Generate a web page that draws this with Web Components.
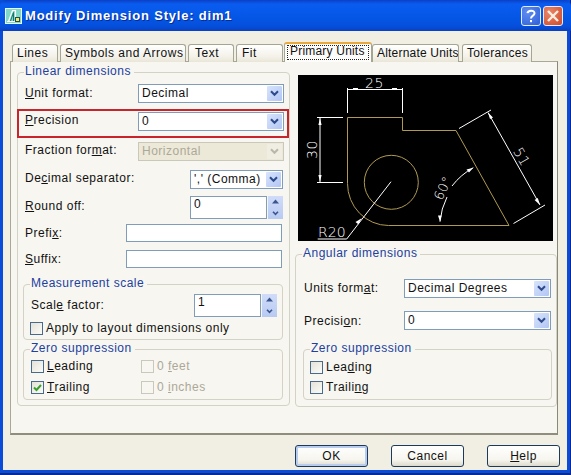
<!DOCTYPE html>
<html>
<head>
<meta charset="utf-8">
<title>Modify Dimension Style</title>
<style>
    html, body { margin: 0; padding: 0; background: #fff; }
    body { font: 12px "Liberation Sans", Arial, sans-serif; letter-spacing: .5px; color: #111; }
    .up1 { display: inline-block; padding-bottom: 2px; }
    .up2 { display: inline-block; padding-bottom: 3px; }
    .up3 { display: inline-block; padding-bottom: 4px; }
</style>
</head>
<body>
<xp-window caption="Modify Dimension Style: dim1">
    <xp-tabs>
        <xp-tab style="width:46px;padding-left:4px">Lines</xp-tab>
        <xp-tab style="width:126px;padding-left:4px;margin-left:2px">Symbols and Arrows</xp-tab>
        <xp-tab style="width:46px;padding-left:6px;margin-left:2px">Text</xp-tab>
        <xp-tab style="width:47px;padding-left:5px;margin-left:2px">Fit</xp-tab>
        <xp-tab selected style="width:88px;margin-left:1px;letter-spacing:.2px">Primary Units</xp-tab>
        <xp-tab style="width:87px;padding-left:4px;letter-spacing:.2px">Alternate Units</xp-tab>
        <xp-tab style="width:70px;padding-left:4px;margin-left:3px;letter-spacing:.3px">Tolerances</xp-tab>
    </xp-tabs>
    <xp-panel>
        <div slot="left">
            <xp-group caption="Linear dimensions" style="margin-top:1px;padding-bottom:5px">
                <xp-row style="margin-top:4px;height:20px">
                    <span><u>U</u>nit format:</span>
                    <xp-combo slot="control" value="Decimal" style="width:146px"></xp-combo>
                </xp-row>
                <xp-row marked style="margin-top:6px;height:29px">
                    <span><u>P</u>recision</span>
                    <xp-combo slot="control" value="0" style="width:146px"></xp-combo>
                </xp-row>
                <xp-row style="margin-top:4px;height:19px">
                    <span class="up2">Fraction for<u>m</u>at:</span>
                    <xp-combo slot="control" value="Horizontal" disabled style="width:146px"></xp-combo>
                </xp-row>
                <xp-row style="margin-top:9px;height:19px">
                    <span class="up2">De<u>c</u>imal separator:</span>
                    <xp-combo slot="control" value="',' (Comma)" style="width:93px;margin-right:1px"></xp-combo>
                </xp-row>
                <xp-row style="margin-top:7px;height:23px">
                    <span class="up3"><u>R</u>ound off:</span>
                    <xp-spin slot="control" value="0" style="width:93px;margin-right:1px"></xp-spin>
                </xp-row>
                <xp-row style="margin-top:5px;height:18px">
                    <span>Prefi<u>x</u>:</span>
                    <xp-input slot="control" style="width:156px;margin-right:2px"></xp-input>
                </xp-row>
                <xp-row style="margin-top:8px;height:18px">
                    <span><u>S</u>uffix:</span>
                    <xp-input slot="control" style="width:156px;margin-right:2px"></xp-input>
                </xp-row>
                <xp-group caption="Measurement scale" style="margin:9px 6px 0 5px;padding-bottom:4px">
                    <xp-row style="margin-top:3px;height:23px;--row-left:7px">
                        <span class="up1">Scal<u>e</u> factor:</span>
                        <xp-spin slot="control" value="1" style="width:83px"></xp-spin>
                    </xp-row>
                    <xp-check style="margin:5px 0 0 6px">Apply to layout dimensions only</xp-check>
                </xp-group>
                <xp-group caption="Zero suppression" style="margin:2px 6px 0 5px;padding-bottom:5px">
                    <xp-checkgrid style="margin:4px 0 0 7px">
                        <xp-check><u>L</u>eading</xp-check>
                        <xp-check disabled>0 <u>f</u>eet</xp-check>
                        <xp-check checked><u>T</u>railing</xp-check>
                        <xp-check disabled>0 <u>i</u>nches</xp-check>
                    </xp-checkgrid>
                </xp-group>
            </xp-group>
        </div>
        <div slot="right">
            <dim-preview></dim-preview>
            <xp-group caption="Angular dimensions" style="margin-top:6px;padding-bottom:6px">
                <xp-row style="margin-top:17px;height:20px;--row-left:8px">
                    <span>Units form<u>a</u>t:</span>
                    <xp-combo slot="control" value="Decimal Degrees" style="width:147px"></xp-combo>
                </xp-row>
                <xp-row style="margin-top:13px;height:19px;--row-left:8px">
                    <span>Precisi<u>o</u>n:</span>
                    <xp-combo slot="control" value="0" style="width:147px"></xp-combo>
                </xp-row>
                <xp-group caption="Zero suppression" style="margin:12px 4px 0 7px;padding-bottom:5px">
                    <xp-check style="margin:5px 0 0 6px">Lea<u>d</u>ing</xp-check>
                    <xp-check style="margin:7px 0 0 6px">Traili<u>n</u>g</xp-check>
                </xp-group>
            </xp-group>
        </div>
    </xp-panel>
    <xp-buttons slot="footer">
        <xp-button default>OK</xp-button>
        <xp-button>Cancel</xp-button>
        <xp-button><u>H</u>elp</xp-button>
    </xp-buttons>
</xp-window>

<script>
class XpElement extends HTMLElement {
    constructor(html) {
        super();
        this.attachShadow({ mode: 'open' });
        this.shadowRoot.innerHTML = html;
    }
}

class XpWindow extends XpElement {
    constructor() {
        super(`
            <style>
                :host {
                    display: flex; flex-direction: column; width: 571px; height: 475px; overflow: hidden;
                    background: #0a4cd8; box-shadow: inset -1px -2px 0 #0a2a8c;
                }
                .title {
                    display: flex; align-items: center; flex: none; height: 31px; padding: 0 8px 0 5px;
                    border-radius: 6px 6px 0 0;
                    background: linear-gradient(#0b3fc4 0, #0a5cf0 4px, #0558e8 14px, #0450dc 26px, #0a3fbe 31px);
                }
                .title svg { flex: none; }
                .caption {
                    flex: 1; margin-left: 3px; color: #fff; font: bold 13px "Liberation Sans", sans-serif;
                    letter-spacing: .8px; text-shadow: 1px 1px 0 #0a2a90; white-space: nowrap;
                }
                .ctl { flex: none; width: 20px; height: 20px; margin-left: 2px; box-sizing: border-box; border: 1px solid #e6ecfa; border-radius: 3px; }
                .help { background: radial-gradient(circle at 30% 30%, #5f8cf0, #2f5fd8); }
                .close { background: radial-gradient(circle at 30% 30%, #e8866a, #cf4a28); }
                .ctl svg { display: block; }
                .client {
                    flex: 1; display: flex; flex-direction: column; margin: 0 4px 5px 3px; padding: 11px 9px 0 7px;
                    background: #f1eee3;
                }
                .footer { display: block; }
            </style>
            <div class="title">
                <svg width="17" height="16" viewBox="0 0 17 16">
                    <rect x=".5" y=".5" width="16" height="15" fill="#7fd8c8" stroke="#e8fbf6"/>
                    <path d="M2 13.5H15M3.5 13.5L7.5 2.5H10.5V10" fill="none" stroke="#fff" stroke-width="1.2"/>
                    <path d="M5.5 13L8.5 4.5V13" fill="none" stroke="#14786c" stroke-width="1"/>
                    <rect x="10.5" y="9.5" width="4" height="4" fill="#f4e874" stroke="#24504a" stroke-width="1"/>
                </svg>
                <div class="caption" id="cap"></div>
                <div class="ctl help"><svg width="18" height="18" viewBox="0 0 18 18"><path d="M5.5 6.2C5.8 3 12.5 2.6 12.5 6.2C12.5 8.8 9 8.4 9 11.5" fill="none" stroke="#fff" stroke-width="2"/><rect x="8" y="13" width="2" height="2.2" fill="#fff"/></svg></div>
                <div class="ctl close"><svg width="18" height="18" viewBox="0 0 18 18"><path d="M4 4L14 14M14 4L4 14" stroke="#fbeee0" stroke-width="2.4"/></svg></div>
            </div>
            <div class="client">
                <slot></slot>
                <slot name="footer" class="footer"></slot>
            </div>
        `);
    }

    connectedCallback() {
        this.shadowRoot.querySelector('#cap').textContent = this.getAttribute('caption');
    }
}

class XpTabs extends XpElement {
    constructor() {
        super(`
            <style>
                :host { display: flex; align-items: flex-end; height: 20px; margin: 0 0 -1px 2px; position: relative; z-index: 1; }
            </style>
            <slot></slot>
        `);
    }
}

class XpTab extends XpElement {
    constructor() {
        super(`
            <style>
                :host {
                    display: block; flex: none; box-sizing: border-box; height: 18px; line-height: 16px; white-space: nowrap; overflow: hidden;
                    border: 1px solid #a5a593; border-bottom: 0; border-radius: 3px 3px 0 0;
                    background: linear-gradient(#fff, #f3f1e8 70%, #e9e6d8);
                }
                :host([selected]) {
                    height: 20px; padding: 1px 2px; background: #fcfcfa;
                    border-top: 2px solid #eaa83a; border-color: #eaa83a #a5a593 #fcfcfa #a5a593;
                }
                .focus { display: block; }
                :host([selected]) .focus { line-height: 12px; outline: 1px dotted #222; outline-offset: -1px; padding: 0 0 3px 3px; }
            </style>
            <span class="focus"><slot></slot></span>
        `);
    }
}

class XpPanel extends XpElement {
    constructor() {
        super(`
            <style>
                :host {
                    display: grid; grid-template-columns: 273px 262px; column-gap: 5px; align-content: start; flex: none; box-sizing: border-box;
                    height: 374px; padding: 2px 0 0 6px;
                    border: 1px solid #a9a798; border-right-color: #8a8878; border-bottom: 2px solid #8f8d7e; background: #f7f6f0;
                }
            </style>
            <slot name="left"></slot>
            <slot name="right"></slot>
        `);
    }
}

class XpGroup extends XpElement {
    constructor() {
        super(`
            <style>
                :host { display: block; }
                fieldset { margin: 0; padding: 0; border: 1px solid #d4d2c4; border-radius: 4px; }
                legend { height: 14px; margin-left: 6px; padding: 0 3px 0 1px; line-height: 13px; color: #2140a0; white-space: nowrap; }
            </style>
            <fieldset>
                <legend id="cap"></legend>
                <slot></slot>
            </fieldset>
        `);
    }

    connectedCallback() {
        this.shadowRoot.querySelector('#cap').textContent = this.getAttribute('caption');
        // padding belongs inside the border, so pass it on to the fieldset
        const pb = this.style.paddingBottom;
        if (pb) {
            this.shadowRoot.querySelector('fieldset').style.paddingBottom = pb;
            this.style.paddingBottom = '0';
        }
    }
}

class XpRow extends XpElement {
    constructor() {
        super(`
            <style>
                :host { display: flex; align-items: center; justify-content: space-between; box-sizing: border-box; padding: 0 5px 0 var(--row-left, 7px); white-space: nowrap; }
                :host([marked]) { margin-left: -1px; padding: 0 3px 0 6px; border: 2px solid #c8242c; align-items: flex-start; }
                :host([marked]) .lbl { margin-top: 2px; }
                :host([marked]) .ctl { margin-top: 1px; }
                .ctl { display: block; }
            </style>
            <span class="lbl"><slot></slot></span>
            <span class="ctl"><slot name="control"></slot></span>
        `);
    }
}

class XpCombo extends XpElement {
    constructor() {
        super(`
            <style>
                :host { display: flex; box-sizing: border-box; height: 19px; padding: 1px; border: 1px solid #7f9db9; background: #fff; }
                .val { flex: 1; padding-left: 2px; line-height: 15px; overflow: hidden; white-space: nowrap; }
                .btn { flex: none; display: flex; align-items: center; justify-content: center; width: 15px; background: linear-gradient(135deg, #d8e4fb, #b2c6f4); border-radius: 1px; }
                :host([disabled]) { border-color: #cac8bb; background: #ece9d8; }
                :host([disabled]) .val { color: #aca899; }
                :host([disabled]) .btn { background: #f0eee2; }
                :host([disabled]) path { stroke: #b9b7a8; }
            </style>
            <div class="val" id="val"></div>
            <div class="btn"><svg width="9" height="7" viewBox="0 0 9 7"><path d="M1 1.2L4.5 4.8L8 1.2" fill="none" stroke="#2c4a8c" stroke-width="2"/></svg></div>
        `);
    }

    connectedCallback() {
        this.shadowRoot.querySelector('#val').textContent = this.getAttribute('value');
    }
}

class XpInput extends XpElement {
    constructor() {
        super(`
            <style>
                :host { display: block; box-sizing: border-box; height: 18px; border: 1px solid #7f9db9; background: #fff; }
            </style>
        `);
    }
}

class XpSpin extends XpElement {
    constructor() {
        super(`
            <style>
                :host { display: flex; height: 23px; gap: 1px; }
                .val { flex: 1; box-sizing: border-box; padding-left: 3px; line-height: 15px; border: 1px solid #7f9db9; background: #fff; }
                .btns { flex: none; display: flex; flex-direction: column; width: 15px; background: linear-gradient(#d0dcf8, #b8caf2); }
                .btns div { flex: 1; display: flex; align-items: center; justify-content: center; }
            </style>
            <div class="val" id="val"></div>
            <div class="btns">
                <div><svg width="7" height="5" viewBox="0 0 7 5"><path d="M3.5 .5L7 4.5H0Z" fill="#3a5590"/></svg></div>
                <div><svg width="7" height="5" viewBox="0 0 7 5"><path d="M1 .8L3.5 3.4L6 .8" fill="none" stroke="#3a5590" stroke-width="1.6"/></svg></div>
            </div>
        `);
    }

    connectedCallback() {
        this.shadowRoot.querySelector('#val').textContent = this.getAttribute('value');
    }
}

class XpCheck extends XpElement {
    constructor() {
        super(`
            <style>
                :host { display: flex; align-items: center; height: 13px; gap: 3px; white-space: nowrap; }
                span { margin-top: -1px; }
                .box { flex: none; box-sizing: border-box; width: 13px; height: 13px; border: 1px solid #4a6a8c; background: linear-gradient(135deg, #e4e2d8, #fbfbf8); }
                .box svg { display: none; }
                :host([checked]) .box svg { display: block; }
                :host([disabled]) { color: #aca899; }
                :host([disabled]) .box { border-color: #cac8bb; background: #f7f6f0; }
            </style>
            <div class="box"><svg width="11" height="11" viewBox="0 0 11 11"><path d="M2 5.5L4.5 8L9 3" fill="none" stroke="#3aa02c" stroke-width="2"/></svg></div>
            <span><slot></slot></span>
        `);
    }
}

class XpCheckGrid extends XpElement {
    constructor() {
        super(`
            <style>
                :host { display: grid; grid-template-columns: 110px 1fr; row-gap: 8px; }
            </style>
            <slot></slot>
        `);
    }
}

class XpButtons extends XpElement {
    constructor() {
        super(`
            <style>
                :host { display: flex; justify-content: flex-end; gap: 23px; margin: 10px -2px 0 0; }
            </style>
            <slot></slot>
        `);
    }
}

class XpButton extends XpElement {
    constructor() {
        super(`
            <style>
                :host {
                    display: flex; align-items: center; justify-content: center; box-sizing: border-box; width: 73px; height: 22px;
                    border: 1px solid #1c3a5c; border-radius: 3px; background: linear-gradient(#fff, #f6f5ee 70%, #dcd8cc);
                }
                :host([default]) { box-shadow: inset 0 0 0 2px #b8ccf0; }
            </style>
            <slot></slot>
        `);
    }
}

class DimPreview extends XpElement {
    constructor() {
        super(`
            <style>
                :host { display: block; width: 255px; height: 166px; margin: 11px 0 0 3px; background: #000; }
                svg { display: block; }
                text { font: 200 14px "DejaVu Sans", "Liberation Sans", sans-serif; letter-spacing: .5px; fill: #fff; }
            </style>
            <svg width="255" height="166" viewBox="298 75 255 166">
                <g fill="none" stroke="#b09a52" stroke-width="1">
                    <path d="M347.5 117.5H402.5V130.5H456L509 225.5H388.5A41 42 0 0 1 347.5 183.5Z"/>
                    <circle cx="391.3" cy="182.3" r="27"/>
                </g>
                <g fill="none" stroke="#fff" stroke-width="1">
                    <path d="M347.5 88V113M402.5 88V113M347.5 89.5H402.5"/>
                    <path d="M317 117.5H343M317 182.5H343M320 117.5V182.5"/>
                    <path d="M459 128.5L491 110M513.5 223.5L545 205M488 112.5L540 205"/>
                    <path d="M440 221.7A68.5 68.5 0 0 1 447 197M452 186A68.5 68.5 0 0 1 473.3 167.7"/>
                    <path d="M391 181.7L346.7 239H317.7"/>
                </g>
                <g fill="#fff">
                    <path d="M353 88H358V90H353ZM392 88H397V90H392Z"/>
                    <path d="M320 118L318.4 125H321.6ZM320 182L318.4 175H321.6Z"/>
                    <path d="M488 112.5L490 119L493 117.4ZM540 205L534.6 200L537.8 198Z"/>
                    <path d="M440 221.7L438 215.5H441.6ZM473.3 167.7L466.5 169.6L469 172.5Z"/>
                    <path d="M361.7 218.3L355.5 222L358.3 224.2Z"/>
                </g>
                <text x="374.5" y="87.5" text-anchor="middle">25</text>
                <text transform="translate(316.5 149.5) rotate(-90)" text-anchor="middle">30</text>
                <text transform="translate(517.4 159.2) rotate(60)" text-anchor="middle">51</text>
                <text transform="translate(447 190) rotate(-65)" text-anchor="middle" style="font-size:13px">60°</text>
                <text x="318" y="236.5" style="letter-spacing:0">R20</text>
            </svg>
        `);
    }
}

customElements.define('xp-window', XpWindow);
customElements.define('xp-tabs', XpTabs);
customElements.define('xp-tab', XpTab);
customElements.define('xp-panel', XpPanel);
customElements.define('xp-group', XpGroup);
customElements.define('xp-row', XpRow);
customElements.define('xp-combo', XpCombo);
customElements.define('xp-input', XpInput);
customElements.define('xp-spin', XpSpin);
customElements.define('xp-check', XpCheck);
customElements.define('xp-checkgrid', XpCheckGrid);
customElements.define('xp-buttons', XpButtons);
customElements.define('xp-button', XpButton);
customElements.define('dim-preview', DimPreview);
</script>
</body>
</html>
